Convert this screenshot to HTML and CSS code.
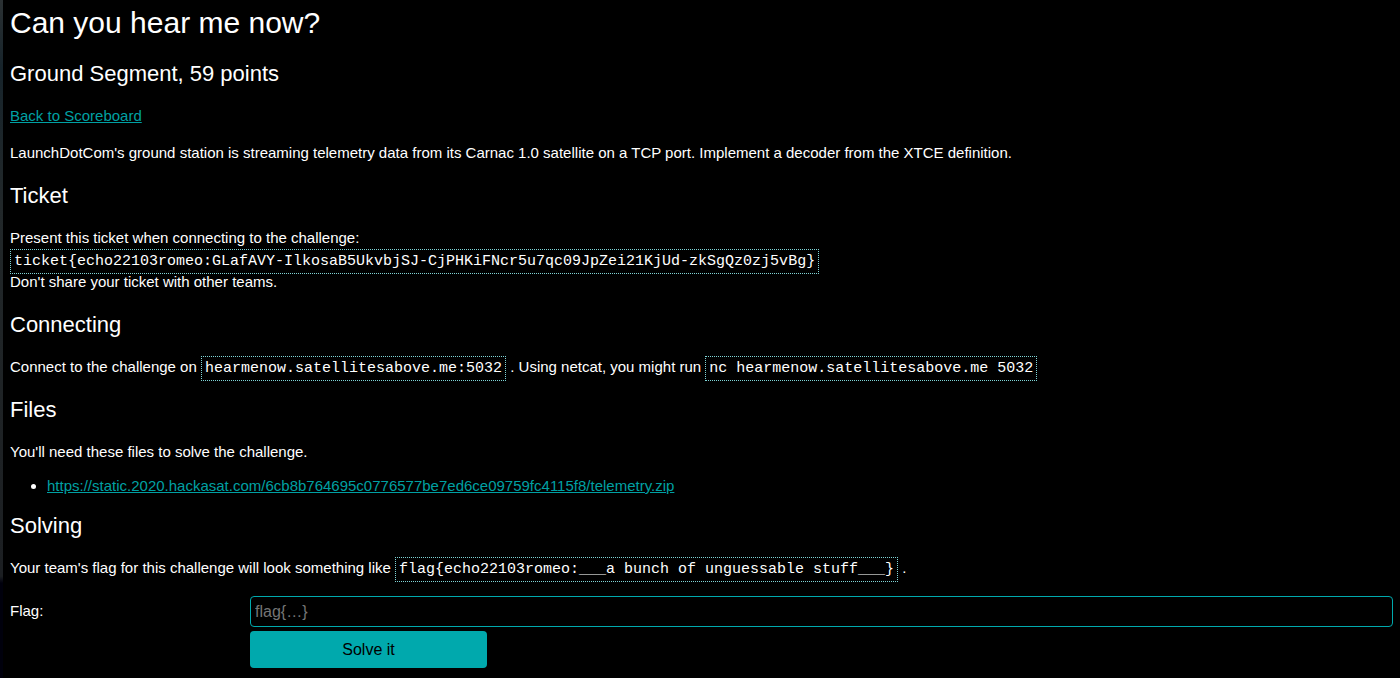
FILE: index.html
```html
<!DOCTYPE html>
<html lang="en">
<head>
<meta charset="utf-8">
<title>Can you hear me now?</title>
<link rel="stylesheet" href="styles.css">
</head>
<body>
<main class="page">
<h1 class="title">Can you hear me now?</h1>
<h2 class="heading">Ground Segment, 59 points</h2>
<p class="text"><a class="link" href="#">Back to Scoreboard</a></p>
<p class="text">LaunchDotCom's ground station is streaming telemetry data from its Carnac 1.0 satellite on a TCP port. Implement a decoder from the XTCE definition.</p>
<h2 class="heading">Ticket</h2>
<p class="text">Present this ticket when connecting to the challenge:<br>
<code class="code">ticket{echo22103romeo:GLafAVY-IlkosaB5UkvbjSJ-CjPHKiFNcr5u7qc09JpZei21KjUd-zkSgQz0zj5vBg}</code><br>
Don't share your ticket with other teams.</p>
<h2 class="heading">Connecting</h2>
<p class="text">Connect to the challenge on <code class="code">hearmenow.satellitesabove.me:5032</code> . Using netcat, you might run <code class="code">nc hearmenow.satellitesabove.me 5032</code></p>
<h2 class="heading">Files</h2>
<p class="text">You'll need these files to solve the challenge.</p>
<ul class="files"><li><a class="link" href="#">https://static.2020.hackasat.com/6cb8b764695c0776577be7ed6ce09759fc4115f8/telemetry.zip</a></li></ul>
<h2 class="heading">Solving</h2>
<p class="text">Your team's flag for this challenge will look something like <code class="code">flag{echo22103romeo:___a bunch of unguessable stuff___}</code> .</p>
<form class="form">
<label class="label" for="flag">Flag:</label>
<input class="input" id="flag" type="text" placeholder="flag{…}">
<button class="button" type="button">Solve it</button>
</form>
</main>
</body>
</html>
```
FILE: styles.css
```css
body {
  margin: 0;
  background: #000 linear-gradient(#2b3133, #17242b 10%, #22282a 30%, #1c1f22 85%, #00000c 86%) no-repeat left top / 3px 100%;
  color: #fff;
  font: 15px/22px "Liberation Sans", Arial, sans-serif;
}
.page { padding: 5px 7px 10px 10px; }
.title { margin: 0 0 20px; font-size: 30px; line-height: 36px; font-weight: 400; }
.heading { margin: 19px 0 18px; font-size: 22px; line-height: 26px; font-weight: 400; }
.text { margin: 15px 0; }
.link { color: #00a0a3; }
.code {
  padding: 3px;
  border: 1px dotted #7fd4d6;
  font: 15px/18px "Liberation Mono", "Courier New", monospace;
}
.files { margin: 15px 0; padding-left: 37px; line-height: 16px; }
.form {
  display: grid;
  grid-template-columns: 237px 1fr;
  gap: 4px 3px;
  margin-top: 17px;
}
.input {
  box-sizing: border-box;
  width: 100%;
  height: 31px;
  padding: 0 4px;
  border: 1px solid #00a9ad;
  border-radius: 4px;
  background: #000;
  color: #fff;
  font: 16px "Liberation Sans", Arial, sans-serif;
}
.input::placeholder { color: #757575; }
.label { padding-top: 4px; }
.button {
  grid-column: 2;
  justify-self: start;
  width: 237px;
  height: 37px;
  border: 0;
  border-radius: 4px;
  background: #00a9ad;
  color: #000;
  font: 16px "Liberation Sans", Arial, sans-serif;
}
```
